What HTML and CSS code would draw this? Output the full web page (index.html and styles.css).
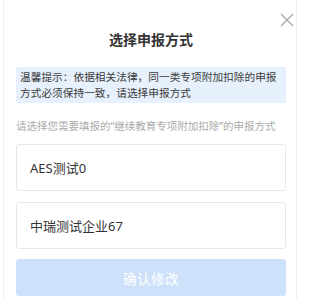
FILE: index.html
```html
<!DOCTYPE html>
<html lang="zh-CN">
<head>
<meta charset="utf-8">
<link rel="stylesheet" href="styles.css">
</head>
<body>
<div class="modal">
  <div class="header">
    <h1 class="title">选择申报方式</h1>
    <button class="close" aria-label="关闭">
      <svg width="14" height="14" viewBox="0 0 14 14"><path d="M1 1 L13 13 M13 1 L1 13" stroke="#a6a6a6" stroke-width="1.2" fill="none"/></svg>
    </button>
  </div>
  <div class="notice">温馨提示：依据相关法律，同一类专项附加扣除的申报方式必须保持一致，请选择申报方式</div>
  <p class="hint">请选择您需要填报的“继续教育专项附加扣除”的申报方式</p>
  <div class="options">
    <div class="option">AES测试0</div>
    <div class="option">中瑞测试企业67</div>
  </div>
  <button class="confirm">确认修改</button>
</div>
</body>
</html>
```
FILE: styles.css
```css
html, body {
  margin: 0;
  padding: 0;
  background: #ffffff;
}
body {
  font-family: "Noto Sans", "Noto Sans CJK SC", sans-serif;
  width: 300px;
  height: 300px;
  overflow: hidden;
}
.modal {
  margin: 0 3px;
  height: 300px;
  box-sizing: border-box;
  border-left: 1px solid #f0f0f0;
  border-right: 1px solid #f0f0f0;
  padding: 0 10px 0 12px;
  display: flex;
  flex-direction: column;
}
.header {
  position: relative;
  padding-top: 30px;
}
.title {
  margin: 0;
  font-size: 14px;
  line-height: 20px;
  font-weight: 700;
  color: #333333;
  text-align: center;
}
.close {
  position: absolute;
  top: 13px;
  right: -8px;
  width: 14px;
  height: 14px;
  padding: 0;
  border: 0;
  background: none;
  display: flex;
}
.notice {
  margin-top: 17px;
  background: #e7f1fd;
  color: #3a3a3a;
  font-size: 10.7px;
  line-height: 16px;
  padding: 2px 3px 2px 4px;
  border-radius: 2px;
}
.hint {
  margin: 15px 0 0;
  font-size: 10.5px;
  line-height: 16px;
  color: #aaaaaa;
  white-space: nowrap;
}
.options {
  margin-top: 10px;
  display: flex;
  flex-direction: column;
  gap: 11px;
}
.option {
  height: 47px;
  box-sizing: border-box;
  border: 1px solid #e8e8e8;
  border-radius: 3px;
  display: flex;
  align-items: center;
  padding-left: 13px;
  font-size: 13px;
  color: #333333;
}
.confirm {
  margin-top: 10px;
  height: 37px;
  border: 0;
  border-radius: 3px;
  background: #cde2fa;
  color: #ffffff;
  font-family: inherit;
  font-size: 13.5px;
  letter-spacing: 0.5px;
}
```
